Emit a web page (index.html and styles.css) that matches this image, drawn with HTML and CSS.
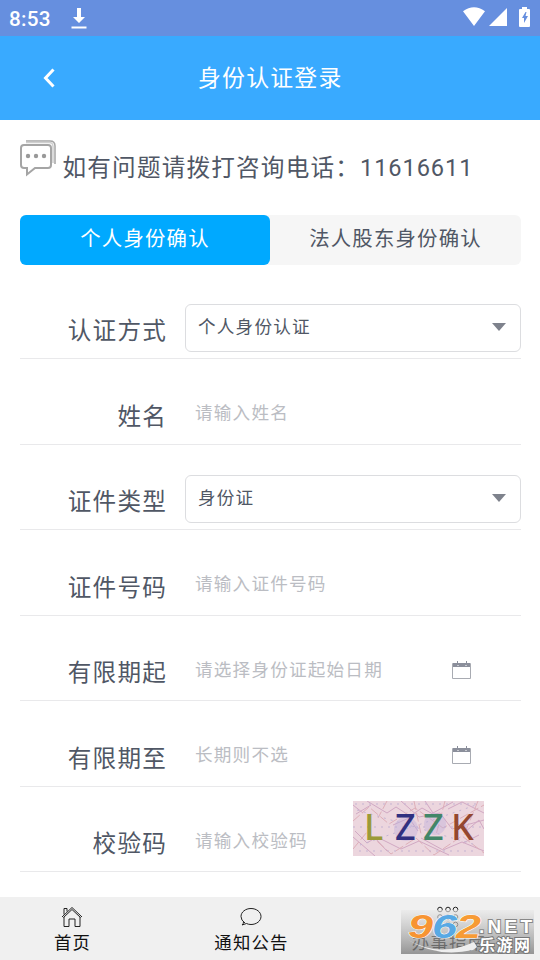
FILE: index.html
```html
<!DOCTYPE html>
<html lang="zh-CN">
<head>
<meta charset="utf-8">
<title>身份认证登录</title>
<link rel="stylesheet" href="styles.css">
</head>
<body>
<div class="status">
  <span class="time">8:53</span>
  <svg class="download" width="16" height="22" viewBox="0 0 16 22"><path fill="#fff" d="M6 0h4v9h4l-6 6-6-6h4zM.5 18.5h15v2H.5z"/></svg>
  <svg class="signals" width="68" height="22" viewBox="0 0 68 22"><path fill="#fff" d="M0 4.2Q11-3.6 22 4.2L11 19zM26 19 44 1v18zM56 3q0-1 1-1h2V0h5v2h2q1 0 1 1v16q0 1-1 1h-9q-1 0-1-1z"/><path fill="#668fdf" d="m62.500 5-3.500 6h2v5l4-7h-2.500l1-4z"/></svg>
</div>
<header class="header">
  <svg class="back" width="12" height="20" viewBox="0 0 12 20"><path d="M10.500 1.500 2.500 10l8 8.500" fill="none" stroke="#fff" stroke-width="3"/></svg>
  <h1 class="title">身份认证登录</h1>
</header>
<main class="content">
  <div class="hotline">
    <svg class="chat" width="36" height="37" viewBox="0 0 36 37" fill="none" stroke="#a5a5a5" stroke-width="1.500"><path d="M6 .9h24q5 0 5 5V24"/><path stroke="#d0d0d0" d="M6 2.500h23q4 0 4 4V23"/><path stroke-width="2" d="M4 5h24q3 0 3 3v17q0 3-3 3H15l-8 6.500V28H4q-3 0-3-3V8q0-3 3-3z"/><g fill="#999" stroke="none"><circle cx="8" cy="16" r="2.200"/><circle cx="16" cy="16" r="2.200"/><circle cx="24" cy="16" r="2.200"/></g></svg>
    <span class="hotline-text">如有问题请拨打咨询电话：<span class="number">11616611</span></span>
  </div>
  <div class="tabs">
    <div class="tab active">个人身份确认</div>
    <div class="tab">法人股东身份确认</div>
  </div>
  <form class="form">
    <div class="row"><label class="label">认证方式</label><div class="select">个人身份认证<i class="arrow"></i></div></div>
    <div class="row"><label class="label">姓名</label><div class="field">请输入姓名</div></div>
    <div class="row"><label class="label">证件类型</label><div class="select">身份证<i class="arrow"></i></div></div>
    <div class="row"><label class="label">证件号码</label><div class="field">请输入证件号码</div></div>
    <div class="row"><label class="label">有限期起</label><div class="field">请选择身份证起始日期</div>
      <svg class="calendar" width="20" height="19" viewBox="0 0 20 19"><path fill="#fff" stroke="#a8abb2" d="M.5 2.500h18v15H.5z"/><path fill="#8b8f9b" d="M1 2h17v4H1z"/><path stroke="#8b8f9b" d="M5.500 0v4M14.500 0v4"/><path stroke="#c8cad0" d="M5 4.500h2M13 4.500h2"/></svg></div>
    <div class="row"><label class="label">有限期至</label><div class="field">长期则不选</div>
      <svg class="calendar" width="20" height="19" viewBox="0 0 20 19"><path fill="#fff" stroke="#a8abb2" d="M.5 2.500h18v15H.5z"/><path fill="#8b8f9b" d="M1 2h17v4H1z"/><path stroke="#8b8f9b" d="M5.500 0v4M14.500 0v4"/><path stroke="#c8cad0" d="M5 4.500h2M13 4.500h2"/></svg></div>
    <div class="row"><label class="label">校验码</label><div class="field">请输入校验码</div>
      <svg class="captcha" width="131" height="55" viewBox="0 0 131 55">
        <path fill="#ecd6de" d="M0 0h131v55H0z"/>
        <g fill="none" stroke-width="1" opacity=".75">
          <path stroke="#c99abb" d="M0 36 22 55M2 30l12 12 8-5 12 13M14 0l20 12 9-6 14 9 12-8 18 10M48 0l18 16 21-4 12 16 32-9M28 38l20 10 18-8 30 14M68 37l22 12 19-8 22 9M72 0l8 12 20-11M95 8l14-7 22 11M3 13l15-9M104 22l8 9 14-12 5 9M40 24l16-7 9 13M0 4l10 8M110 42l16-8"/>
          <path stroke="#d9a2ac" stroke-dasharray="9 3" d="M0 20l16-14 20 17 26-16 28 20 41-23M0 48l14-17 24 22 25-16 18 17 28-19 22 17M34 0l-9 17M61 0l7 33M92 0l-9 34M125 0l-14 34"/>
          <path stroke="#b8a9cf" stroke-dasharray="2 5" d="M4 9l119 35M7 44 123 4M0 26h131M2 3h124M6 50h119"/>
        </g>
        <g fill="#bdaedb" opacity=".4"><circle cx="53" cy="28" r="12"/><circle cx="82" cy="23" r="11"/></g>
        <g class="captcha-code"><text x="11" y="39" fill="#9b9a38">L</text><text x="42" y="39" fill="#303080">Z</text><text x="70" y="39" fill="#428668">Z</text><text x="98" y="39" fill="#94472f">K</text></g>
      </svg></div>
  </form>
</main>
<nav class="nav">
  <div class="nav-item"><svg width="22" height="22" viewBox="0 0 22 22" fill="none" stroke="#222"><path d="M1 11 11 1.500 21 11M2.500 11.500 11 3.500l8.500 8M3 11v9.500h5V13h6v7.500h5V11M3 8.500V2.500h3v3"/></svg><span>首页</span></div>
  <div class="nav-item"><svg width="22" height="22" viewBox="0 0 22 22" fill="none" stroke="#222"><path d="M5 17Q1 14.500 1 10.500C1 6 5.500 2.500 11 2.500s10 3.500 10 8-4.500 8-10 8q-2.500 0-4.500-1L2 19q1.500-1 1.500-3"/></svg><span>通知公告</span></div>
  <div class="nav-item"><svg width="22" height="22" viewBox="0 0 22 22" fill="none" stroke="#222"><g id="dots"><circle cx="3" cy="3.500" r="2.300"/><circle cx="11" cy="3.500" r="2.300"/><circle cx="18.500" cy="3.500" r="2.300"/></g><use href="#dots" y="7.500"/><use href="#dots" y="15"/></svg><span>办事指南</span></div>
  <svg class="watermark" width="133" height="44" viewBox="0 0 133 44">
    <defs><linearGradient id="plate" x2="0" y2="1"><stop stop-color="#e8e8e8" stop-opacity=".6"/><stop offset="1" stop-color="#777" stop-opacity=".75"/></linearGradient></defs>
    <path fill="url(#plate)" d="M0 0h133v44H0z"/>
    <path fill="#eee" d="M7 30q32 18 66 2l3 5-4 3q-36 8-65-10z"/>
    <g class="mark-digits"><text x="7" y="28" fill="#f79432" textLength="25" lengthAdjust="spacingAndGlyphs">9</text><text x="31" y="28" fill="#58a9e4" textLength="25" lengthAdjust="spacingAndGlyphs">6</text><text x="55" y="28" fill="#f79b35" textLength="25" lengthAdjust="spacingAndGlyphs">2</text></g>
    <text class="mark-net" x="78" y="23" textLength="53">.NET</text>
    <text class="mark-name" x="78" y="41" textLength="51">乐游网</text>
  </svg>
</nav>
</body>
</html>
```
FILE: styles.css
```css
* { box-sizing: border-box; }
body {
  margin: 0;
  width: 540px;
  height: 960px;
  display: flex;
  flex-direction: column;
  overflow: hidden;
  background: #fff;
  color: #505765;
  font-family: Roboto, "Noto Sans CJK SC", sans-serif;
  letter-spacing: 1.2px;
}
.status {
  height: 36px;
  flex: none;
  display: flex;
  align-items: flex-start;
  padding: 7px 9px 0 9px;
  background: #668fdf;
  color: #fff;
}
.time { width: 62px; font-size: 20.7px; font-weight: 500; line-height: 24px; letter-spacing: .3px; }
.download { margin-top: 1px; }
.signals { margin-left: auto; }
.header {
  height: 84px;
  flex: none;
  display: flex;
  align-items: center;
  background: #39aaff;
  color: #fff;
}
.back { margin-left: 43px; }
.title { margin: 2px 0 0 143px; font-size: 22.9px; font-weight: 400; line-height: 34px; }
.content { flex: 1; padding: 20px 19px 0 20px; }
.hotline { height: 75px; display: flex; }
.chat { margin-right: 6.500px; }
.hotline-text { margin-top: 10px; font-size: 23.6px; line-height: 36px; white-space: nowrap; }
.number { letter-spacing: .9px; }
.tabs { display: flex; height: 50px; background: #f6f6f6; border-radius: 6px; }
.tab { width: 251px; text-align: center; font-size: 20.4px; line-height: 48px; }
.active { width: 250px; background: #00a9ff; color: #fff; border-radius: 6px; }
.form { padding-top: 8.5px; }
.row { display: flex; height: 85.5px; border-bottom: 1px solid #e9e9eb; }
.label { width: 147px; flex: none; padding-top: 39.5px; text-align: right; font-size: 23.6px; line-height: 36px; }
.select {
  width: 336px;
  height: 48px;
  margin: 30.5px 0 0 18px;
  padding: 0 14px 0 12px;
  border: 1px solid #dcdde0;
  border-radius: 6px;
  display: flex;
  align-items: flex-start;
  justify-content: space-between;
  font-size: 17.6px;
  line-height: 45px;
}
.arrow { margin-top: 18px; border: 7px solid transparent; border-top: 8px solid #7e828c; border-bottom: 0; }
.field { width: 277px; padding: 41px 0 0 28px; flex: none; color: #bbbdc3; font-size: 17.6px; line-height: 26px; white-space: nowrap; }
.calendar { margin: 45px 0 0 8px; }
.captcha { margin: 14.5px 0 0 -91px; }
.captcha-code { font: bold 36px "Noto Sans", sans-serif; font-weight: 500; letter-spacing: 0; }
.nav {
  position: relative;
  height: 63px;
  flex: none;
  display: flex;
  justify-content: space-between;
  padding: 9px 55px 0 54px;
  background: #f0f0f0;
  color: #111;
}
.nav-item { display: flex; flex-direction: column; align-items: center; font-size: 17.4px; line-height: 30px; }
.nav-item span { margin-right: -1.2px; }
.watermark { position: absolute; left: 401px; top: 13px; }
.mark-digits { font: italic bold 34px "Liberation Sans", sans-serif; stroke: #fff; stroke-width: 1px; paint-order: stroke; letter-spacing: 0; }
.mark-net { font: bold 19px "Liberation Sans", sans-serif; fill: #fff; stroke: #888; stroke-width: 2px; paint-order: stroke; letter-spacing: 0; }
.mark-name { font: bold 16px "Noto Sans CJK SC", sans-serif; fill: #fff; stroke: #777; stroke-width: 2px; paint-order: stroke; letter-spacing: 0; }
```
